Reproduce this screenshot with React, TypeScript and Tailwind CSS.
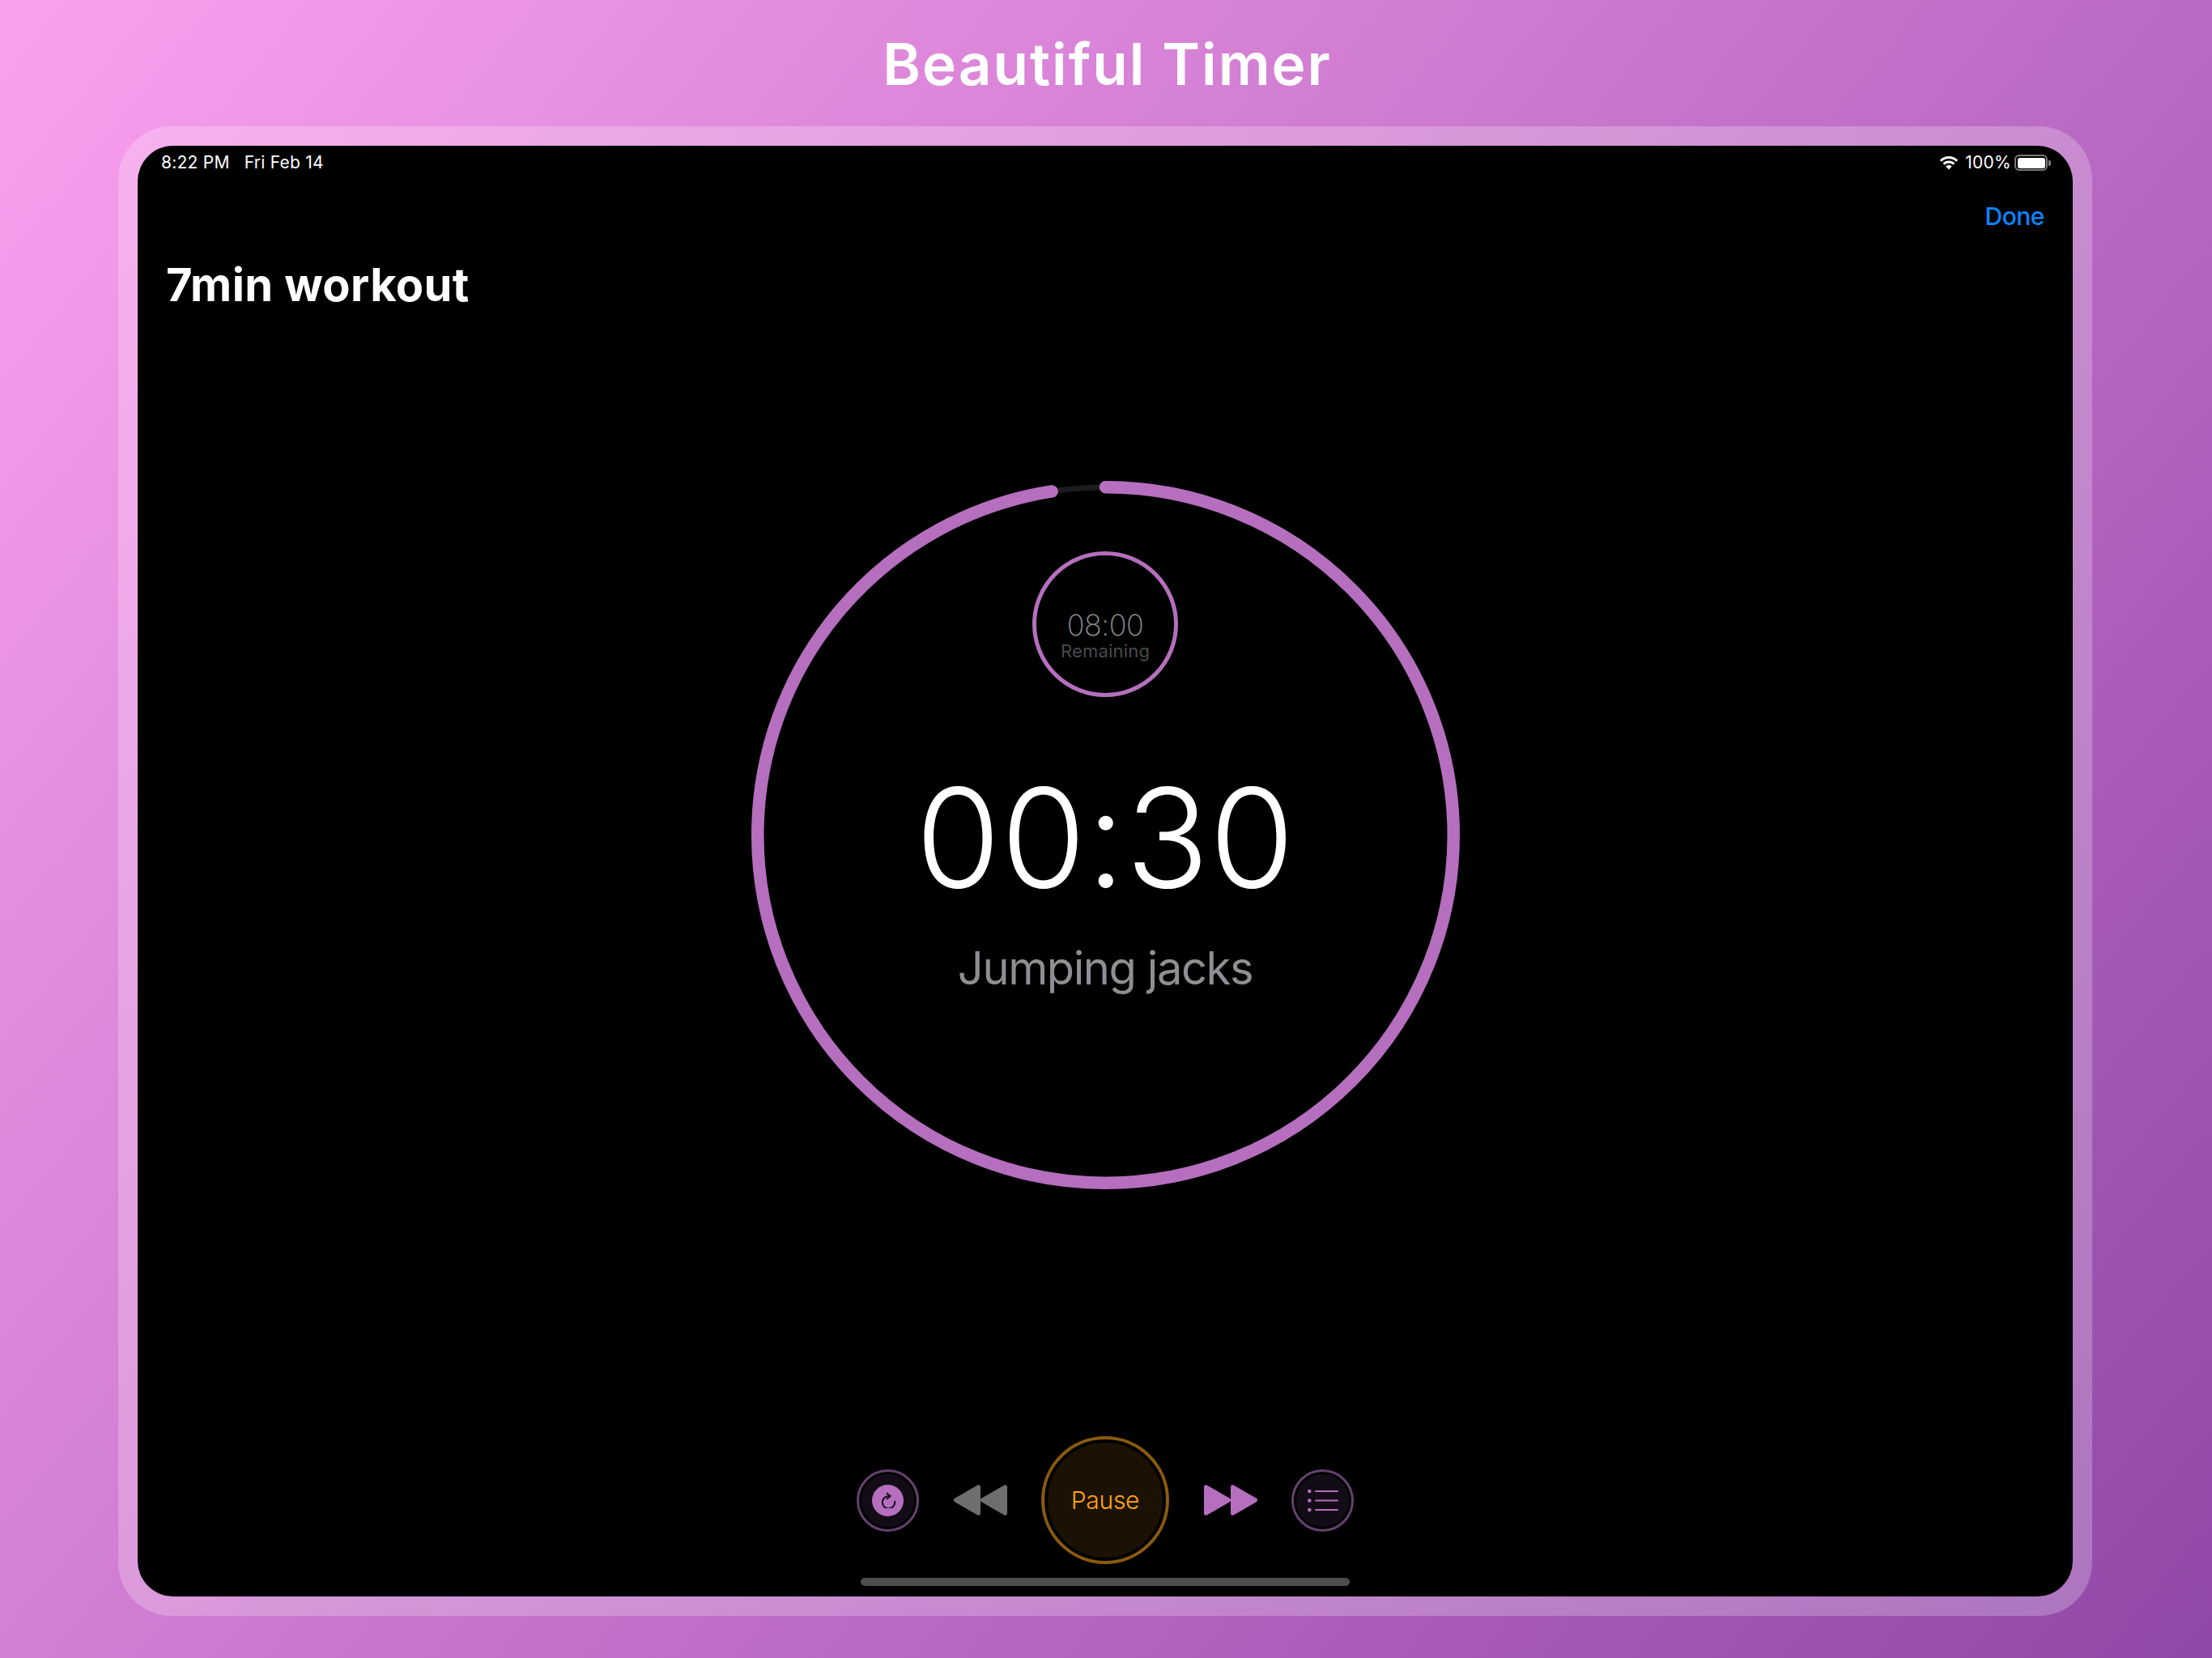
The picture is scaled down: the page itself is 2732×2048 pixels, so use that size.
const accent = "#b56fbe";

function Wifi() {
  return (
    <svg width="24" height="17" viewBox="0 0 24 17" fill="none" stroke="white" strokeWidth="3">
      <path d="M1.75 5.75A14.5 14.5 0 0 1 22.25 5.75" />
      <path d="M5.6 9.6A9 9 0 0 1 18.4 9.6" />
      <path d="M12 16.5L8.3 12.4A5.2 5.2 0 0 1 15.7 12.4Z" fill="white" stroke="none" />
    </svg>
  );
}

function Battery() {
  return (
    <div className="flex items-center ml-[4px]">
      <div className="w-[41px] h-[20px] rounded-[6px] border-2 border-[#7a7a7a] p-[1.5px]">
        <div className="w-full h-full rounded-[3px] bg-white" />
      </div>
      <div className="w-[3px] h-[7px] ml-[1px] rounded-r-[2px] bg-[#7a7a7a]" />
    </div>
  );
}

function Ring() {
  return (
    <svg className="absolute inset-0" width="875" height="875" viewBox="0 0 875 875" fill="none">
      <circle cx="437.5" cy="437.5" r="429.75" stroke="#1c1c1e" strokeWidth="7" />
      <circle
        cx="437.5"
        cy="437.5"
        r="429.75"
        stroke={accent}
        strokeWidth="15.5"
        strokeLinecap="round"
        pathLength="360"
        strokeDasharray="351.1 360"
        transform="rotate(-90 437.5 437.5)"
      />
    </svg>
  );
}

function SmallButton({ children }: { children: React.ReactNode }) {
  return (
    <div className="w-[77px] h-[77px] rounded-full border-[3px] border-[#65416f] p-[3px]">
      <div className="w-full h-full rounded-full bg-[#130c16] flex items-center justify-center">{children}</div>
    </div>
  );
}

function Skip({ color, back }: { color: string; back?: boolean }) {
  return (
    <svg
      width="66"
      height="38"
      viewBox="0 0 67 38"
      fill={color}
      stroke={color}
      strokeWidth="5"
      strokeLinejoin="round"
      className={back ? "-scale-x-100" : ""}
    >
      <path d="M2.5 2.5L31 19L2.5 35.5Z" />
      <path d="M36 2.5L64.5 19L36 35.5Z" />
    </svg>
  );
}

export default function App() {
  return (
    <div className="w-[2732px] h-[2048px] pr-[2px] flex flex-col items-center bg-[linear-gradient(129deg,#fba0ee,#9048a8)] font-['Inter',sans-serif] overflow-hidden">
      <h1 className="h-[156px] pt-[2px] ml-[5px] flex items-center text-white text-[71px] font-semibold tracking-[2px]">Beautiful Timer</h1>

      <div className="p-6 bg-white/[0.23] rounded-[66px]">
        <div className="w-[2390px] h-[1792px] bg-black rounded-[44px] flex flex-col overflow-hidden">
          <div className="h-[42px] pl-[29px] pr-[27px] flex items-center justify-between text-white text-[21px] tracking-[0.25px]">
            <div className="flex gap-[18px]">
              <span>8:22 PM</span>
              <span>Fri Feb 14</span>
            </div>
            <div className="flex items-center">
              <Wifi />
              <span className="ml-[8px]">100%</span>
              <Battery />
            </div>
          </div>

          <div className="h-[90px] pr-[35px] flex items-center justify-end text-[#0a84ff] text-[30px] font-medium tracking-[-0.5px]">Done</div>

          <div className="h-[80px] pl-[35px] flex items-center text-white text-[56px] font-bold tracking-[0.4px]">7min workout</div>

          <div className="mt-[202px] self-center relative w-[875px] h-[875px] pt-[87px] flex flex-col items-center">
            <Ring />
            <div className="w-[180px] h-[180px] rounded-full border-[5px] border-[#b56fbe] flex flex-col items-center pt-[64px]">
              <div className="text-[36px] leading-[44px] font-extralight tracking-[-0.5px] text-[#8e8e93]">08:00</div>
              <div className="text-[22px] leading-[20px] tracking-[0.2px] text-[#4a4a4c]">Remaining</div>
            </div>
            <div className="mt-[70px] text-[170px] leading-[206px] font-light tracking-[0.5px] text-white">00:30</div>
            <div className="mt-[24px] text-[56px] leading-[70px] font-normal tracking-[-1.4px] text-[#8e8e93]">Jumping jacks</div>
          </div>

          <div className="mt-[305px] h-[158px] flex items-center justify-center gap-[42.5px]">
            <SmallButton>
              <div className="w-[39px] h-[39px] rounded-full bg-[#b56fbe] flex items-center justify-center">
                <svg width="20" height="20" viewBox="0 0 20 20" fill="none" stroke="#130c16" strokeWidth="2">
                  <path d="M10.5 5A7.7 7.7 0 1 0 18 11" />
                  <path d="M8 1.2L12.5 5L8 8.8" />
                </svg>
              </div>
            </SmallButton>
            <Skip color="#6e6e6e" back />
            <div className="w-[158px] h-[158px] rounded-full border-4 border-[#8a5a0e] p-1">
              <div className="w-full h-full rounded-full bg-[#1c1204] flex items-center justify-center text-[#ffa50a] text-[30px] font-light tracking-[-0.3px]">Pause</div>
            </div>
            <Skip color="#b56fbe" />
            <SmallButton>
              <svg width="38" height="29" viewBox="0 0 38 29" fill="none" stroke="#b56fbe" strokeWidth="2" strokeLinecap="round">
                <path d="M10 3H37M10 14.5H37M10 26H37" />
                <circle cx="2.3" cy="3" r="2.3" fill="#b56fbe" stroke="none" />
                <circle cx="2.3" cy="14.5" r="2.3" fill="#b56fbe" stroke="none" />
                <circle cx="2.3" cy="26" r="2.3" fill="#b56fbe" stroke="none" />
              </svg>
            </SmallButton>
          </div>

          <div className="mt-[17px] self-center w-[604px] h-[10px] rounded-full bg-[#4d4d4d]" />
        </div>
      </div>
    </div>
  );
}
